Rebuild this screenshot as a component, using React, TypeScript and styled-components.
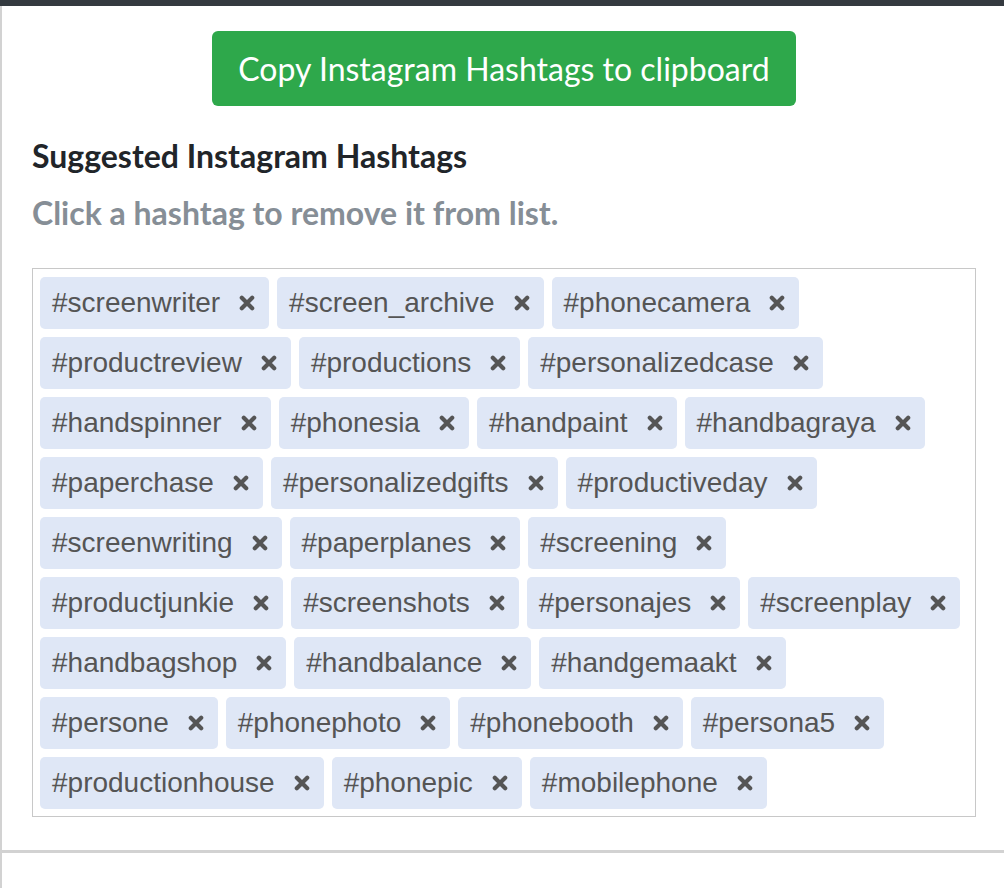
import styled, { createGlobalStyle } from 'styled-components';

const hashtags: string[] = [
  '#screenwriter',
  '#screen_archive',
  '#phonecamera',
  '#productreview',
  '#productions',
  '#personalizedcase',
  '#handspinner',
  '#phonesia',
  '#handpaint',
  '#handbagraya',
  '#paperchase',
  '#personalizedgifts',
  '#productiveday',
  '#screenwriting',
  '#paperplanes',
  '#screening',
  '#productjunkie',
  '#screenshots',
  '#personajes',
  '#screenplay',
  '#handbagshop',
  '#handbalance',
  '#handgemaakt',
  '#persone',
  '#phonephoto',
  '#phonebooth',
  '#persona5',
  '#productionhouse',
  '#phonepic',
  '#mobilephone'
];

const GlobalStyle = createGlobalStyle`
  html, body {
    margin: 0;
    padding: 0;
    background: #ffffff;
    font-family: Lato, 'Liberation Sans', sans-serif;
  }
`;

function RemoveIcon() {
  return (
    <svg width="16" height="16" viewBox="0 0 16 16" aria-hidden="true">
      <path d="M2.8 2.8 L13.2 13.2 M13.2 2.8 L2.8 13.2" stroke="#555555" strokeWidth="4.2" strokeLinecap="round" />
    </svg>
  );
}

export default function App() {
  return (
    <>
      <GlobalStyle />
      <TopBar />
      <Page>
        <Section>
          <ButtonRow>
            <CopyButton type="button">Copy Instagram Hashtags to clipboard</CopyButton>
          </ButtonRow>
          <Heading>Suggested Instagram Hashtags</Heading>
          <SubHeading>Click a hashtag to remove it from list.</SubHeading>
          <TagBox>
            {hashtags.map((tag) => (
              <Tag key={tag}>
                {tag}
                <TagRemove>
                  <RemoveIcon />
                </TagRemove>
              </Tag>
            ))}
          </TagBox>
        </Section>
      </Page>
    </>
  );
}

const TopBar = styled.div`
  height: 6px;
  background-color: #343a40;
`;

const Page = styled.div`
  border-left: 2px solid #d2d2d2;
  min-height: 882px;
`;

const Section = styled.div`
  padding: 25px 28px 33px 30px;
  border-bottom: 3px solid #d2d2d2;
`;

const ButtonRow = styled.div`
  display: flex;
  justify-content: center;
`;

const CopyButton = styled.button`
  height: 75px;
  padding: 0 26px;
  border: none;
  border-radius: 6px;
  background-color: #2ea84b;
  color: #ffffff;

  font-family: Lato, sans-serif;
  font-size: 32px;
  font-weight: 400;
  cursor: pointer;
`;

const Heading = styled.h2`
  margin: 28px 0 0;
  color: #212529;

  font-family: Lato, sans-serif;
  font-size: 32px;
  font-weight: 700;
  line-height: 44px;
`;

const SubHeading = styled.h3`
  margin: 13px 0 0;
  color: #868e96;

  font-family: Lato, sans-serif;
  font-size: 32px;
  font-weight: 700;
  line-height: 44px;
`;

const TagBox = styled.div`
  margin-top: 33px;
  border: 1px solid #c8c8c8;
  padding: 8px 7px 7px;

  display: flex;
  flex-wrap: wrap;
  gap: 8px;
`;

const Tag = styled.div`
  height: 52px;
  padding: 0 14px 0 12px;
  border-radius: 5px;
  background-color: #dfe7f6;
  color: #555555;

  display: flex;
  align-items: center;

  font-family: 'Liberation Sans', Arial, sans-serif;
  font-size: 28px;
  cursor: pointer;
`;

const TagRemove = styled.span`
  margin-left: 19px;
  display: flex;
  align-items: center;
`;
